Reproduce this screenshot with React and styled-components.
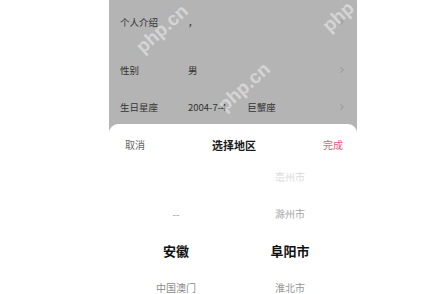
import React from 'react'
import styled, { createGlobalStyle } from 'styled-components'
import { ChevronRight } from 'lucide-react'

const GlobalStyle = createGlobalStyle`
  html, body {
    margin: 0;
    background: #ffffff;
    font-family: "Noto Sans CJK SC", "Noto Sans", sans-serif;
  }
`

const Page = styled.div`
  width: 440px;
  height: 294px;
  padding-left: 109px;
  box-sizing: border-box;
  overflow: hidden;
`

const Screen = styled.div`
  position: relative;
  width: 248px;
  height: 294px;
  background: #b4b4b4;
  overflow: hidden;
`

const Row = styled.div`
  display: flex;
  align-items: center;
  height: ${p => p.h}px;
  padding: 0 10px 0 11px;
  font-size: 9.5px;
  color: #333;
`

const Label = styled.span`
  width: 68px;
`

const Value = styled.span`
  flex: 1;
`

const Extra = styled.span`
  margin-left: 21px;
`

const Arrow = styled(ChevronRight)`
  color: #8c8c8c;
`

const Watermark = styled.span`
  position: absolute;
  left: ${p => p.x}px;
  top: ${p => p.y}px;
  transform: rotate(-42deg);
  font-family: "Liberation Sans", sans-serif;
  font-size: 19px;
  font-weight: bold;
  color: rgba(255, 255, 255, 0.45);
  pointer-events: none;
`

const Sheet = styled.div`
  position: absolute;
  left: 0;
  right: 0;
  top: 124px;
  bottom: 0;
  background: #ffffff;
  border-radius: 9px 9px 0 0;
`

const Header = styled.div`
  display: flex;
  justify-content: space-between;
  height: 34px;
  padding: 14px 14px 0 16px;
  box-sizing: border-box;
  line-height: 14px;
`

const Action = styled.span`
  font-size: 10px;
  color: ${p => p.color};
  width: 30px;
  text-align: ${p => p.align};
`

const Title = styled.span`
  font-size: 11px;
  font-weight: bold;
  color: #1a1a1a;
`

const Picker = styled.div`
  display: grid;
  grid-template-columns: 114px 114px;
  padding-left: 10px;
`

const Column = styled.div`
  display: flex;
  flex-direction: column;
`

const Option = styled.div`
  height: 37px;
  display: flex;
  align-items: center;
  justify-content: center;
  font-size: ${p => (p.active ? 13 : 10)}px;
  font-weight: ${p => (p.active ? 'bold' : 'normal')};
  color: ${p => p.color};
`

const rows = [
  { label: '个人介绍', value: '，', h: 44 },
  { label: '性别', value: '男', h: 52 },
  { label: '生日星座', value: '2004-7-4', extra: '巨蟹座', h: 22 },
]

const provinces = [
  { name: '', color: '#fff' },
  { name: '--', color: '#9a9a9a' },
  { name: '安徽', color: '#111', active: true },
  { name: '中国澳门', color: '#8a8a8a' },
]

const cities = [
  { name: '亳州市', color: '#dcdcdc' },
  { name: '滁州市', color: '#a8a8a8' },
  { name: '阜阳市', color: '#111', active: true },
  { name: '淮北市', color: '#959595' },
]

export default function App() {
  return (
    <Page>
      <GlobalStyle />
      <Screen>
        {rows.map(r => (
          <Row key={r.label} h={r.h}>
            <Label>{r.label}</Label>
            <Value>
              {r.value}
              {r.extra && <Extra>{r.extra}</Extra>}
            </Value>
            <Arrow size={10} strokeWidth={2} />
          </Row>
        ))}
        <Watermark x={22} y={18}>php.cn</Watermark>
        <Watermark x={104} y={76}>php.cn</Watermark>
        <Watermark x={212} y={6}>php</Watermark>
        <Sheet>
          <Header>
            <Action color="#666" align="left">取消</Action>
            <Title>选择地区</Title>
            <Action color="#ec5478" align="right">完成</Action>
          </Header>
          <Picker>
            <Column>
              {provinces.map((o, i) => (
                <Option key={i} color={o.color} active={o.active}>{o.name}</Option>
              ))}
            </Column>
            <Column>
              {cities.map((o, i) => (
                <Option key={i} color={o.color} active={o.active}>{o.name}</Option>
              ))}
            </Column>
          </Picker>
        </Sheet>
      </Screen>
    </Page>
  )
}
